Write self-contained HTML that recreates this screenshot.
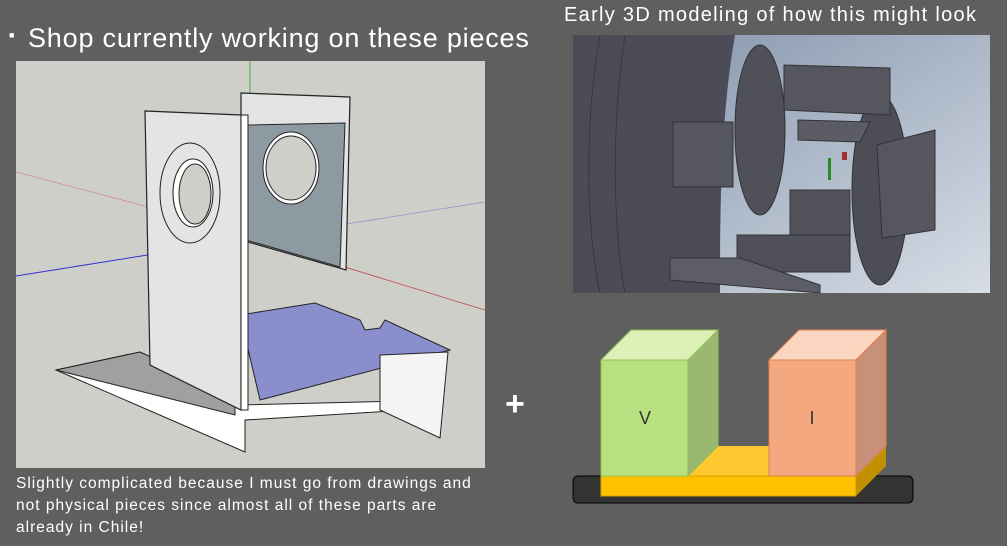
<!DOCTYPE html>
<html><head><style>
html,body{margin:0;padding:0}
body{width:1007px;height:546px;background:#5f5f5f;position:relative;overflow:hidden;font-family:"Liberation Sans",sans-serif;color:#fff}
.t{position:absolute;white-space:nowrap}
</style></head><body>
<div class="t" style="left:9px;top:30px;font-size:9px">■</div>
<div class="t" style="left:28px;top:23px;font-size:27px;letter-spacing:0.8px">Shop currently working on these pieces</div>
<div class="t" style="left:564px;top:4px;font-size:20px;letter-spacing:1.3px">Early 3D modeling of how this might look</div>
<div class="t" style="left:16px;top:473px;font-size:15.5px;line-height:22px;letter-spacing:1px">Slightly complicated because I must go from drawings and<br>not physical pieces since almost all of these parts are<br>already in Chile!</div>

<svg style="position:absolute;left:16px;top:61px" width="469" height="407" viewBox="16 61 469 407">
<rect x="16" y="61" width="469" height="407" fill="#cfcfca"/>
<line x1="16" y1="172" x2="160" y2="210" stroke="#d09090" stroke-width="0.8"/>
<line x1="16" y1="276" x2="160" y2="253" stroke="#3030d0" stroke-width="1"/>
<line x1="340" y1="225" x2="485" y2="202" stroke="#9090d0" stroke-width="0.8"/>
<line x1="335" y1="264" x2="485" y2="310" stroke="#c04040" stroke-width="0.8"/>
<line x1="250" y1="61" x2="250" y2="100" stroke="#40b040" stroke-width="1"/>
<polygon points="241,93 350,97 346,270 241,240" fill="#e4e4e4" stroke="#222" stroke-width="1.2"/>
<polygon points="246,125 345,123 340,267 246,240" fill="#8e9aa2" stroke="#222"/>
<ellipse cx="291" cy="168" rx="28" ry="36" fill="#fff" stroke="#222"/>
<ellipse cx="291" cy="168" rx="25" ry="32" fill="#cfcfca" stroke="#222"/>
<polygon points="56,370 140,352 240,405 440,400 440,408 245,420 245,452 56,370" fill="#fff" stroke="#222"/>
<polygon points="56,370 140,352 235,395 235,415" fill="#a0a0a0" stroke="#222"/>
<polygon points="240,315 315,303 360,320 365,330 380,328 385,320 450,350 260,400" fill="#8a8ecc" stroke="#222"/>
<polygon points="145,111 241,115 241,410 150,365" fill="#e4e4e4" stroke="#222" stroke-width="1.2"/>
<polygon points="241,115 248,115 248,410 241,410" fill="#fff" stroke="#222"/>
<ellipse cx="190" cy="193" rx="30" ry="50" fill="none" stroke="#222"/>
<ellipse cx="193" cy="193" rx="20" ry="34" fill="#fff" stroke="#222"/>
<ellipse cx="195" cy="194" rx="16" ry="30" fill="#cfcfca" stroke="#222"/>
<polygon points="380,355 448,352 440,438 380,410" fill="#f4f4f4" stroke="#222"/>
</svg>

<svg style="position:absolute;left:573px;top:35px" width="417" height="258" viewBox="573 35 417 258">
<defs><linearGradient id="bg" x1="0" y1="0" x2="1" y2="1"><stop offset="0" stop-color="#8090a8"/><stop offset="1" stop-color="#d6dde6"/></linearGradient></defs>
<rect x="573" y="35" width="417" height="258" fill="url(#bg)"/>
<path d="M573,35 L735,35 C720,120 720,220 720,293 L573,293Z" fill="#4b4c57"/>
<path d="M600,35 C585,120 585,220 600,293" stroke="#333" fill="none" stroke-width="0.7"/>
<path d="M625,35 C612,120 612,220 625,293" stroke="#333" fill="none" stroke-width="0.7"/>
<rect x="673" y="122" width="60" height="65" fill="#55565f" stroke="#333"/>
<ellipse cx="760" cy="130" rx="25" ry="85" fill="#4f5059" stroke="#333"/>
<ellipse cx="880" cy="190" rx="28" ry="95" fill="#4c4d56" stroke="#333"/>
<polygon points="784,65 890,68 890,115 784,110" fill="#55565f" stroke="#333"/>
<polygon points="798,120 870,122 860,142 798,140" fill="#5b5c66" stroke="#333"/>
<polygon points="877,145 935,130 935,230 882,238" fill="#55565f" stroke="#333"/>
<polygon points="790,190 850,190 850,250 790,250" fill="#52535c" stroke="#333"/>
<polygon points="737,235 850,235 850,272 737,272" fill="#4f5059" stroke="#333"/>
<polygon points="670,258 740,258 820,285 820,293 670,280" fill="#5c5d67" stroke="#333"/>
<rect x="828" y="158" width="3" height="22" fill="#2a8a2a"/>
<rect x="842" y="152" width="5" height="8" fill="#a03030"/>
</svg>

<div class="t" style="left:505px;top:385px;font-size:34px;font-weight:bold">+</div>

<svg style="position:absolute;left:565px;top:325px" width="360" height="190" viewBox="565 325 360 190">
<rect x="573" y="476" width="340" height="27" rx="5" fill="#333" stroke="#000"/>
<polygon points="601,476 856,476 886,446 631,446" fill="#ffc830"/>
<rect x="601" y="476" width="255" height="20" fill="#ffc000" stroke="#d8a000"/>
<polygon points="856,476 886,446 886,466 856,496" fill="#c09000"/>
<polygon points="601,360 688,360 718,330 631,330" fill="#dcf0b8" stroke="#90c050"/>
<rect x="601" y="360" width="87" height="116" fill="#b8e080" stroke="#90c050"/>
<polygon points="688,360 718,330 718,446 688,476" fill="#9ab870" stroke="#90c050"/>
<polygon points="769,360 856,360 886,330 799,330" fill="#fbd6c0" stroke="#e08050"/>
<rect x="769" y="360" width="87" height="116" fill="#f4a880" stroke="#e08050"/>
<polygon points="856,360 886,330 886,446 856,476" fill="#c89078" stroke="#e08050"/>
<text x="645" y="424" font-family="Liberation Sans" font-size="18" fill="#333" text-anchor="middle">V</text>
<text x="812" y="424" font-family="Liberation Sans" font-size="18" fill="#333" text-anchor="middle">I</text>
</svg>
</body></html>
